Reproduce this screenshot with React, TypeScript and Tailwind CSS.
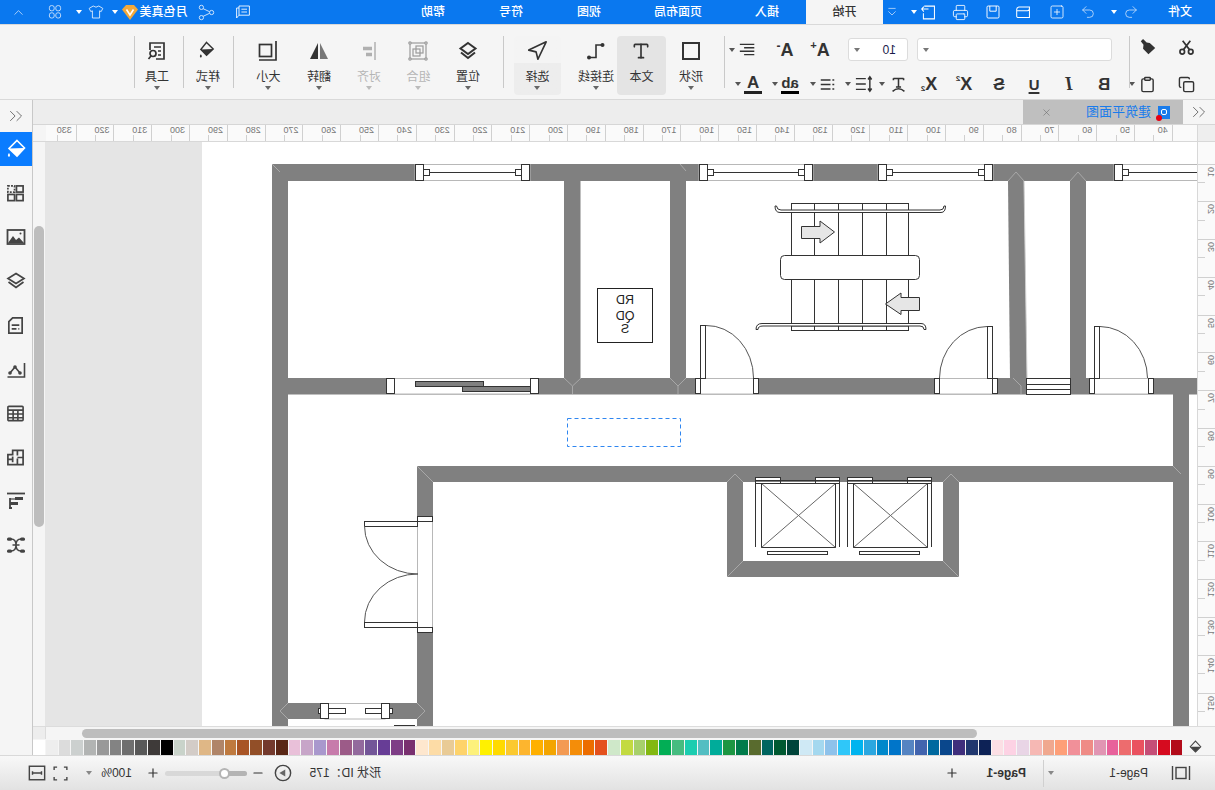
import React from "react";
import { Printer, SquarePlus, Undo2, Redo2, Copy, Clipboard, ChevronUp, ChevronsLeft, Navigation, Type, X, Plus, Minus } from "lucide-react";

type P = { children?: React.ReactNode; s?: number; c?: string; w?: number };
// draws in on-screen orientation: the page itself is mirrored
const I = ({ children, s = 20, c = "text-[#3a3a3a]", w = 2 }: P) => (
  <svg viewBox="0 0 20 20" width={s} height={s} fill="none" stroke="currentColor" strokeWidth={w} className={"-scale-x-100 shrink-0 " + c}>
    {children}
  </svg>
);
const Caret = ({ c = "border-t-[#555]" }: { c?: string }) => (
  <span className={"block w-0 h-0 shrink-0 border-x-[3px] border-x-transparent border-t-[4px] " + c} />
);
const Wh = "border-t-white";

const Slot = ({ c, children }: { c: string; children?: React.ReactNode }) => (
  <div className={"flex items-center justify-center shrink-0 " + c}>{children}</div>
);

const Sep = ({ c = "" }: { c?: string }) => <div className={"w-px h-[52px] mt-[11px] bg-[#c9c9c9] shrink-0 " + c} />;

const Big = ({ c, label, icon, caret = true, off = false, bg = "" }: { c: string; label: string; icon: React.ReactNode; caret?: boolean; off?: boolean; bg?: string }) => (
  <div className={"flex flex-col items-center shrink-0 h-[59px] mt-[11px] rounded-sm " + c + " " + bg}>
    <div className="h-[29px] flex items-center justify-center">{icon}</div>
    <div className={"text-[12px] leading-[16px] mt-[4px] " + (off ? "text-[#b5b5b5]" : "text-[#333]")}>{label}</div>
    {caret && <div className="mt-[1px]"><Caret c={off ? "border-t-[#bbb]" : "border-t-[#666]"} /></div>}
  </div>
);

const Glyph = ({ t, c = "" }: { t: string; c?: string }) => (
  <span className={"font-['Liberation_Sans',sans-serif] text-[#333] leading-none " + c}>{t}</span>
);

const palette = ["#ffffff","#eeeeee","#dcdcdc","#ccd0cf","#b2b4b3","#999999","#838383","#6f6f6f","#595959","#3e3a39","#000000","#c9d3ca","#d3ccc7","#dfb786","#b08569","#bf7a3f","#a85425","#924f28","#743a2d","#5a2716","#e9c0d9","#c7a5c8","#a998cd","#c77bab","#9c5b88","#936a9d","#735698","#673d96","#7e3d86","#79306f","#fee7ce","#fddca6","#e9cb96","#fed36b","#fdf17b","#fff100","#ffda00","#fbc92f","#fdb52e","#ffb000","#f3a500","#f39a53","#f48d09","#ec6d00","#e4511d","#cfe8c9","#c3da41","#a7d06b","#83b811","#02ae55","#46bc80","#1bcdb0","#53bec2","#00ac9a","#1c9642","#007b4a","#596b2e","#006560","#005931","#00443a","#cfe9f5","#a4d8ef","#8ec2eb","#2fc7f9","#00b4ef","#2ba7e0","#0088cb","#0075c9","#5584c2","#4264ae","#00699f","#0a478c","#3f2e7c","#20376f","#0d2256","#fcdfe5","#fdd2e4","#e9d5e6","#f6b8b4","#f0a88f","#fe9f78","#f19099","#ef8b86","#e195b3","#e8619b","#ed6c6e","#ea5260","#c54e77","#d60b1f","#b30b1a"];

const hLabels = Array.from({ length: 30 }, (_, i) => 40 + i * 10);
const vLabels = Array.from({ length: 15 }, (_, i) => 10 + i * 10);

const TopBar = () => (
  <div className="flex items-center h-[24px] bg-[#0a78ef] text-white text-[12px] font-medium shrink-0">
    <Slot c="w-[70px]">文件</Slot>
    <Slot c="w-[28px]"><Redo2 size={16} strokeWidth={1.2} className="-scale-x-100 text-[#cfe3fb]" /></Slot>
    <Slot c="w-[6px]"><Caret c={Wh} /></Slot>
    <Slot c="w-[28px] ml-[9px]"><Undo2 size={16} strokeWidth={1.2} className="-scale-x-100 text-[#cfe3fb]" /></Slot>
    <Slot c="w-[28px] ml-[3px]"><SquarePlus size={16} strokeWidth={1.2} /></Slot>
    <Slot c="w-[28px] ml-[5px]">
      <I s={17} c="text-white" w={1.2}><path d="M2 6.5Q2 4 4.5 3.5H17V16H4Q2 16 2 14ZM2.5 8H14.5Q17 8 17 5" /></I>
    </Slot>
    <Slot c="w-[28px] ml-[3px]">
      <I s={16} c="text-white" w={1.2}><rect x="2.5" y="2.5" width="15" height="15" rx="1.5" /><path d="M6 2.5V9H14V2.5" /></I>
    </Slot>
    <Slot c="w-[28px] ml-[4px]"><Printer size={17} strokeWidth={1.2} /></Slot>
    <Slot c="w-[28px] ml-[4px]">
      <I s={17} c="text-white" w={1.2}><path d="M5 2.5H17V17.5H4V11M10 6H2M4.5 3L2 6L4.5 9" /></I>
    </Slot>
    <Slot c="w-[6px] -ml-[2px]"><Caret c={Wh} /></Slot>
    <Slot c="w-[16px] ml-[11px]">
      <I s={12} c="text-[#d6e7fc]" w={1.2}><path d="M4 4H16M4 9L10 15L16 9" /></I>
    </Slot>
    <Slot c="w-[77px] h-[24px] ml-[1px] bg-[#f5f5f5] text-[#333]">开始</Slot>
    <Slot c="w-[78px]">插入</Slot>
    <Slot c="w-[100px]">页面布局</Slot>
    <Slot c="w-[78px]">视图</Slot>
    <Slot c="w-[78px]">符号</Slot>
    <Slot c="w-[78px]">帮助</Slot>
    <Slot c="w-[28px] ml-[137px]">
      <I s={16} c="text-white" w={1.1}><path d="M5 2.5H18V14H5ZM5 5H2V17.5L5 14M8 6.5H15M8 10H15" /></I>
    </Slot>
    <Slot c="w-[28px] ml-[8px]">
      <I s={17} c="text-[#d6e7fc]" w={1.1}><circle cx="4" cy="4" r="2.5" /><circle cx="4" cy="16" r="2.5" /><circle cx="16" cy="10" r="2.5" /><path d="M6 5.5L13.5 9M6 14.5L13.5 11" /></I>
    </Slot>
    <Slot c="w-[47px] ml-[6px]"><span className="whitespace-nowrap">月色真美</span></Slot>
    <Slot c="w-[16px] ml-[2px]">
      <svg viewBox="0 0 16 15" width="16" height="15"><path d="M0 4.5L4 0H12L16 4.5L8 15Z" fill="#f2a93b" /><path d="M4.5 4.5L8 10L11.5 4.5" fill="none" stroke="#fff" strokeWidth="1.6" /></svg>
    </Slot>
    <Slot c="w-[6px] ml-[4px]"><Caret c={Wh} /></Slot>
    <Slot c="w-[20px] ml-[6px]">
      <I s={16} c="text-[#e3effd]" w={1.1}><path d="M6.5 2.5L1.5 5.5L3.5 9.5L5.5 8.5V17.5H14.5V8.5L16.5 9.5L18.5 5.5L13.5 2.5Q10 5.5 6.5 2.5Z" /></I>
    </Slot>
    <Slot c="w-[6px] ml-[4px]"><Caret c={Wh} /></Slot>
    <Slot c="w-[20px] ml-[11px]">
      <I s={16} c="text-[#d6e7fc]" w={1.1}><rect x="3" y="2" width="6" height="6.5" rx="2.5" /><rect x="11" y="2" width="6" height="6.5" rx="2.5" /><rect x="3" y="11" width="6" height="6.5" rx="2.5" /><rect x="11" y="11" width="6" height="6.5" rx="2.5" /></I>
    </Slot>
    <Slot c="w-[20px] ml-[16px]"><ChevronUp size={15} strokeWidth={1.2} className="text-[#d6e7fc]" /></Slot>
  </div>
);

const Ribbon = () => (
  <div className="flex h-[76px] bg-[#f5f5f5] border-t border-b border-[#d9d9d9] shrink-0">
    {/* clipboard */}
    <div className="w-[85px] shrink-0 flex flex-col">
      <div className="flex h-[24px] mt-[10px]">
        <Slot c="w-[56px]">
          <I s={17} c="text-[#333]"><circle cx="5" cy="15" r="2.7" /><circle cx="15" cy="15" r="2.7" /><path d="M6.5 12.5L14.5 2M13.5 12.5L5.5 2" /></I>
        </Slot>
        <Slot c="w-[22px]">
          <I s={18} c="text-[#333]"><path d="M2 3.5L4.5 1L8.5 5L12 5.5L18 11L10.5 18L4.5 12L5 7.5Z" fill="currentColor" stroke="none" /></I>
        </Slot>
      </div>
      <div className="flex h-[24px] mt-[13px]">
        <Slot c="w-[56px]"><Copy size={17} strokeWidth={2} className="-scale-x-100 text-[#333]" /></Slot>
        <Slot c="w-[22px]"><Clipboard size={17} strokeWidth={2} className="text-[#333]" /></Slot>
        <Slot c="w-[6px] ml-[2px]"><Caret /></Slot>
      </div>
    </div>
    <Sep />
    {/* font */}
    <div className="w-[404px] shrink-0 flex flex-col text-[#333]">
      <div className="flex items-center h-[23px] mt-[13px]">
        <div className="w-[195px] h-[23px] ml-[17px] bg-white border border-[#dcdcdc] rounded-[3px] flex items-center justify-end pr-[5px] shrink-0"><Caret c="border-t-[#777]" /></div>
        <div className="w-[60px] h-[23px] ml-[9px] bg-white border border-[#dcdcdc] rounded-[3px] flex items-center shrink-0">
          <span className="ml-[11px] text-[12px] text-[#1a1a4a] font-['Liberation_Sans',sans-serif]">10</span>
          <span className="ml-auto mr-[5px]"><Caret c="border-t-[#777]" /></span>
        </div>
        <Slot c="w-[36px] ml-[10px]"><Glyph t="A" c="text-[18px] font-bold" /><Glyph t="+" c="text-[11px] font-bold -mt-[8px]" /></Slot>
        <Slot c="w-[34px]"><Glyph t="A" c="text-[18px] font-bold" /><Glyph t="-" c="text-[12px] font-bold -mt-[8px]" /></Slot>
        <Slot c="w-[24px] ml-[8px]">
          <I s={17} c="text-[#333]" w={1.7}><path d="M1 4H18M6 8H18M1 12H18M6 16H18" /></I>
        </Slot>
        <Slot c="w-[6px] ml-[1px]"><Caret /></Slot>
      </div>
      <div className="flex items-center h-[24px] mt-[11px] ml-[7px]">
        <Slot c="w-[36px]"><Glyph t="B" c="text-[17px] font-bold" /></Slot>
        <Slot c="w-[34px]"><Glyph t="I" c="text-[18px] font-bold italic font-['Liberation_Serif',serif]" /></Slot>
        <Slot c="w-[36px]"><Glyph t="U" c="text-[15px] font-bold underline decoration-[2px] underline-offset-2" /></Slot>
        <Slot c="w-[34px]"><Glyph t="S" c="text-[17px] font-bold line-through" /></Slot>
        <Slot c="w-[36px]"><Glyph t="X" c="text-[18px] font-bold" /><Glyph t="2" c="text-[8px] font-bold -mt-[10px]" /></Slot>
        <Slot c="w-[34px]"><Glyph t="X" c="text-[18px] font-bold" /><Glyph t="2" c="text-[8px] font-bold mt-[10px]" /></Slot>
        <Slot c="w-[35px] gap-[5px] pl-[2px]">
          <I s={17} c="text-[#333]" w={1.8}><path d="M4 3H16M10 3V13M7 13H13M3 18Q10 12 17 18" /><path d="M4 2.5V5M16 2.5V5" /></I>
          <Caret />
        </Slot>
        <Slot c="w-[36px] gap-[4px]">
          <I s={18} c="text-[#333]" w={1.6}><path d="M1 4H12M1 10H12M1 16H12" /><path d="M16.5 2V18M14.5 5L16.5 2L18.5 5M14.5 15L16.5 18L18.5 15" /></I>
          <Caret />
        </Slot>
        <Slot c="w-[37px] gap-[4px]">
          <I s={15} c="text-[#333]" w={2}><path d="M1 4H14M1 10H14M1 16H14M16.5 4H19M16.5 10H19M16.5 16H19" /></I>
          <Caret />
        </Slot>
        <Slot c="w-[37px] gap-[3px]">
          <div className="flex flex-col items-center pt-[1px]"><span className="text-[15px] leading-[15px] font-bold font-['Liberation_Sans',sans-serif] text-[#333]">ab</span><span className="w-[18px] h-[3px] bg-black mt-[1px]" /></div>
          <Caret />
        </Slot>
        <Slot c="w-[37px] gap-[3px]">
          <div className="flex flex-col items-center pt-[1px]"><span className="text-[17px] leading-[15px] font-bold font-['Liberation_Sans',sans-serif] text-[#333]">A</span><span className="w-[18px] h-[3px] bg-[#222] mt-[1px]" /></div>
          <Caret />
        </Slot>
      </div>
    </div>
    <Sep />
    <Big c="w-[50px] ml-[8px]" label="形状" icon={<div className="w-[18px] h-[18px] border-2 border-[#333]" />} />
    <Big c="w-[49px]" bg="bg-[#e4e4e4]" label="文本" caret={false} icon={<Type size={20} strokeWidth={2} className="text-[#333]" />} />
    <Big c="w-[42px]" label="连接线" icon={
      <I s={20} c="text-[#333]" w={1.6}><path d="M4 16.5H10V4H15" /><circle cx="3" cy="16.5" r="2" fill="currentColor" stroke="none" /><circle cx="16.5" cy="4" r="2" fill="currentColor" stroke="none" /></I>
    } />
    <Big c="w-[47px] ml-[14px]" bg="bg-linear-to-b from-[#f4f4f4] from-45% to-[#ededed] to-45%" label="选择" icon={<Navigation size={22} strokeWidth={1.8} className="-scale-x-100 text-[#333]" />} />
    <Sep c="ml-[10px]" />
    <Big c="w-[50px] ml-[10px]" label="位置" icon={
      <I s={20} c="text-[#333]" w={2}><path d="M10 2L17.5 7.5L10 13L2.5 7.5Z" /><path d="M3 11.5L10 17L17 11.5" /></I>
    } />
    <Big c="w-[49px]" off label="组合" icon={
      <I s={20} c="text-[#9a9a9a]" w={1.2}><rect x="2" y="2" width="16" height="16" /><rect x="8" y="5" width="7" height="7" /><rect x="5" y="8" width="7" height="7" /><circle cx="2" cy="2" r="1.2" fill="#f5f5f5" /><circle cx="18" cy="2" r="1.2" fill="#f5f5f5" /><circle cx="2" cy="18" r="1.2" fill="#f5f5f5" /><circle cx="18" cy="18" r="1.2" fill="#f5f5f5" /></I>
    } />
    <Big c="w-[50px]" off label="对齐" icon={
      <I s={20} c="text-[#b0b0b0]" w={1.5}><path d="M16 1V19" /><path d="M4 7.5H13M7 13.5H13" strokeWidth="3.5" /></I>
    } />
    <Big c="w-[50px]" label="翻转" icon={
      <I s={20}><path d="M9 2V18H1Z" fill="#333" stroke="none" /><path d="M11 2V18H19Z" fill="#777" stroke="none" /></I>
    } />
    <Big c="w-[51px]" label="大小" icon={
      <I s={20} c="text-[#333]" w={1.7}><rect x="1.5" y="3.5" width="12" height="12" /><path d="M18 0V19H1" /></I>
    } />
    <Sep c="ml-[9px]" />
    <Big c="w-[40px] ml-[5px]" label="样式" icon={
      <I s={19} c="text-[#333]" w={1.5}><path d="M9 1.5L16 8.5L9 15L3 9Z" /><path d="M3 9L16 8.5L9 15Z" fill="currentColor" stroke="none" /><path d="M3 14Q1 16.5 3 17.5Q5 16.5 3 14Z" fill="currentColor" stroke="none" /></I>
    } />
    <Sep c="ml-[4px]" />
    <Big c="w-[42px] ml-[5px]" label="工具" icon={
      <I s={20} c="text-[#333]" w={1.7}><path d="M9 18H17V2H3V9" /><path d="M7 6H14M11 10H14M11 14H14" /><circle cx="6" cy="12.5" r="3" /><path d="M4 15L1.5 18" /></I>
    } />
    <Sep c="ml-[1px]" />
  </div>
);

const Wall = ({ x, y, w, h }: { x: number; y: number; w: number; h: number }) => <rect x={x} y={y} width={w} height={h} fill="#808080" />;
const Opening = ({ x, y, w, h }: { x: number; y: number; w: number; h: number }) => <rect x={x} y={y + 0.5} width={w} height={h - 1} fill="#fff" stroke="#b8b8b8" strokeWidth="1" />;
const J = ({ x, y, w, h, f = "#fff" }: { x: number; y: number; w: number; h: number; f?: string }) => <rect x={x + 0.5} y={y + 0.5} width={w} height={h} fill={f} stroke="#333" strokeWidth="1" />;
const Miter = ({ d }: { d: string }) => <path d={d} fill="none" stroke="#a8a8a8" strokeWidth="1" />;
const Arc = ({ d }: { d: string }) => <path d={d} fill="none" stroke="#555" strokeWidth="1" />;
const Win = ({ a, b }: { a: number; b: number }) => (
  <g>
    <Opening x={a} y={164} w={b - a} h={17} />
    <path d={`M${a + 15} 172.5H${b - 15}`} stroke="#333" strokeWidth="1" />
    <J x={a + 8} y={169} w={6} h={6} />
    <J x={b - 15} y={169} w={6} h={6} />
    <J x={a} y={164} w={8} h={16} />
    <J x={b - 9} y={164} w={8} h={16} />
  </g>
);

const Plan = () => (
  <svg width="995" height="584" className="block shrink-0 bg-white">
    <g transform="matrix(-1 0 0 1 1197 -142)">
      <Wall x={272} y={164} w={925} h={17} />
      <Wall x={272} y={164} w={16} h={562} />
      <Wall x={272} y={378} w={925} h={16.5} />
      <Wall x={564} y={181} w={16.5} h={197} />
      <Wall x={670} y={181} w={16} h={197} />
      <polygon points="1008,181 1024,181 1027,378 1010,378" fill="#808080" />
      <path d="M1024 181L1027 378" stroke="#cfcfcf" strokeWidth="1" />
      <Wall x={1070} y={181} w={16} h={197} />
      <Wall x={1173} y={394} w={16} h={332} />
      <Wall x={417} y={466} w={772} h={16} />
      <Wall x={417} y={466} w={16} h={260} />
      <Wall x={288} y={703} w={129} h={16} />
      <Wall x={727} y={482} w={16} h={95} />
      <Wall x={943} y={482} w={16} h={95} />
      <Wall x={727} y={561} w={232} h={16} />

      <Miter d="M564 378L572.5 386L581 378M572.5 386V394M670 378L678 386L686 378M678 386V394" />
      <Miter d="M417 466L433 482M288 703L280 711L288 719M417 703L425 711L417 719" />
      <Miter d="M727 482L735 474L743 482M943 482L951 474L959 482M743 561L727 577M943 561L959 577" />
      <Miter d="M1008 181L1016 172L1024 181M1070 181L1078 172L1086 181" />
      <Miter d="M680 164L686 171M1013 378L1021 386V394M1173 466L1181 474M272 164L280 172" />

      <Win a={415} b={530} />
      <Win a={699} b={813} />
      <Win a={878} b={993} />
      <Opening x={1114} y={164} w={100} h={17} />
      <path d="M1129 172.5H1197" stroke="#333" strokeWidth="1" />
      <J x={1122} y={169} w={6} h={6} />
      <J x={1114} y={164} w={8} h={16} />

      {/* sliding door */}
      <Opening x={390} y={378} w={145} h={16.5} />
      <J x={415} y={381} w={68} h={5} f="#808080" />
      <J x={462} y={386} w={68} h={5} f="#808080" />
      <J x={386} y={378} w={8} h={15} />
      <J x={530} y={378} w={8} h={15} />

      {/* doors */}
      <Opening x={697} y={378} w={60} h={16.5} />
      <J x={700} y={325} w={5} h={53} />
      <J x={695} y={378} w={5} h={15} />
      <J x={753} y={378} w={5} h={15} />
      <Arc d="M706 325.5A47 52.5 0 0 1 753.5 378" />

      <Opening x={936} y={378} w={60} h={16.5} />
      <J x={987} y={326} w={5} h={52} />
      <J x={934} y={378} w={5} h={15} />
      <J x={992} y={378} w={5} h={15} />
      <Arc d="M987 326.5A48 52 0 0 0 939.5 378" />

      <Opening x={1091} y={378} w={60} h={16.5} />
      <J x={1094} y={326} w={5} h={52} />
      <J x={1089} y={378} w={5} h={15} />
      <J x={1148} y={378} w={5} h={15} />
      <Arc d="M1100 326.5A48 52 0 0 1 1147.5 378" />

      {/* steps in wall */}
      <rect x="1026.5" y="378.5" width="44" height="16" fill="#fff" stroke="#333" />
      <path d="M1026.5 384.5H1070.5M1026.5 389.5H1070.5" stroke="#333" />

      {/* stairs */}
      <path d="M791.5 203.5V331M814.5 203.5V331M838.5 203.5V331M862.5 203.5V331M886.5 203.5V331M908.5 203.5V331" stroke="#333" />
      <rect x="791.5" y="203.5" width="117" height="7" fill="none" stroke="#333" />
      <rect x="791.5" y="326" width="117" height="4.5" fill="none" stroke="#333" />
      <path d="M775 206Q775 212.5 780 212.5L941 212.5Q945.5 212.5 945.5 206L944 206Q944 210 940 210L781 210Q777 210 776.5 206Z" fill="#fff" stroke="#333" />
      <path d="M756 329.5Q756 323.5 762 323.5L921 323.5Q926 323.5 926 329.5L924 329.5Q924 326 920 326L763 326Q758 326 758 329.5Z" fill="#fff" stroke="#333" />
      <rect x="780.5" y="255.5" width="139" height="24" rx="4" fill="#fff" stroke="#333" />
      <path d="M801.5 226.5H820V221L834.5 232L820 243V238.5H801.5Z" fill="#e6e6e6" stroke="#333" />
      <path d="M919.5 297.5H901V293L885.5 304L901 314.5V310.5H919.5Z" fill="#e6e6e6" stroke="#333" />

      {/* text box frame */}
      <rect x="597.5" y="288.5" width="55" height="54" fill="#fff" stroke="#222" />
      {/* selection */}
      <rect x="567.5" y="418.5" width="113" height="28" fill="none" stroke="#2f86f0" strokeDasharray="4 3" />

      {/* double door */}
      <rect x="417.5" y="516.5" width="15" height="116" fill="#fff" stroke="#b8b8b8" />
      <J x={417} y={516} w={15} h={5} />
      <J x={417} y={627} w={15} h={5} />
      <J x={364} y={521} w={53} h={5} />
      <J x={364} y={622} w={53} h={5} />
      <Arc d="M364.5 526A53 48 0 0 0 418 574" />
      <Arc d="M364.5 622A53 48 0 0 1 418 574" />

      {/* small window */}
      <rect x="325" y="703.5" width="60" height="15.5" fill="#fff" stroke="#b8b8b8" />
      <J x={318} y={708} w={27} h={5} />
      <J x={365} y={708} w={27} h={5} />
      <J x={320} y={703} w={8} h={15} />
      <J x={381} y={703} w={8} h={15} />
      <path d="M394 725.5H415" stroke="#333" />

      {/* lifts */}
      <g fill="none" stroke="#333">
        <rect x="761.5" y="483.5" width="74" height="64" />
        <path d="M761.5 483.5L835.5 547.5M835.5 483.5L761.5 547.5" stroke="#666" />
        <path d="M755.5 547V480.5H839.5V547" />
        <rect x="767.5" y="551.5" width="60" height="3" />
        <rect x="853.5" y="483.5" width="74" height="64" />
        <path d="M853.5 483.5L927.5 547.5M927.5 483.5L853.5 547.5" stroke="#666" />
        <path d="M847.5 547V480.5H931.5V547" />
        <rect x="859.5" y="551.5" width="60" height="3" />
      </g>
      <J x={755} y={477} w={25} h={3} />
      <J x={815} y={477} w={24} h={3} />
      <J x={847} y={477} w={25} h={3} />
      <J x={907} y={477} w={24} h={3} />
      <J x={755} y={480} w={25} h={3} f="none" />
      <J x={815} y={480} w={24} h={3} f="none" />
      <J x={847} y={480} w={25} h={3} f="none" />
      <J x={907} y={480} w={24} h={3} f="none" />
    </g>
    <g fontFamily="'Liberation Sans', sans-serif" fontSize="12.5" fill="#222" textAnchor="middle">
      <text x="572" y="162">RD</text>
      <text x="572" y="177.5">QD</text>
      <text x="572" y="191">S</text>
    </g>
  </svg>
);

const SideIcon = ({ children }: { children: React.ReactNode }) => (
  <div className="h-[44px] flex items-center justify-center shrink-0">{children}</div>
);

const Sidebar = () => (
  <div className="w-[33px] shrink-0 bg-[#f5f5f5] border-l border-[#c8c8c8] flex flex-col">
    <div className="h-[32px] flex items-center justify-center shrink-0"><ChevronsLeft size={22} strokeWidth={1} className="text-[#666]" /></div>
    <div className="h-[34px] flex items-center justify-center shrink-0 bg-[#0a7cff]">
      <I s={20} c="text-white" w={1.6}><path d="M11 1.5L18.5 9L11 17L3 9.5Z" /><path d="M3 9.5L18.5 9L11 17Z" fill="currentColor" stroke="none" /><path d="M3 14Q.8 16.5 3 18Q5 16.5 3 14Z" fill="currentColor" stroke="none" /></I>
    </div>
    <div className="h-[5px] shrink-0" />
    <SideIcon>
      <I s={19} c="text-[#444]" w={1.8}><rect x="11" y="2" width="7" height="6.5" /><rect x="2" y="11" width="7" height="6.5" /><rect x="11" y="11" width="7" height="6.5" /><path d="M2 2H9V8.5H2Z" strokeDasharray="2 1.3" /></I>
    </SideIcon>
    <SideIcon>
      <I s={20} c="text-[#444]" w={1.8}><rect x="1.5" y="3" width="17" height="14" /><path d="M2 16L7 9L10 13L13 10.5L18 16Z" fill="currentColor" stroke="none" /><circle cx="14.5" cy="6.5" r="1" fill="currentColor" stroke="none" /></I>
    </SideIcon>
    <SideIcon>
      <I s={20} c="text-[#444]" w={1.7}><path d="M10 2.5L18 7.5L10 12.5L2 7.5Z" /><path d="M2.5 11L10 16.5L17.5 11" /></I>
    </SideIcon>
    <SideIcon>
      <I s={19} c="text-[#444]" w={1.8}><path d="M7 2H17V18H3V6Z" /><path d="M6 9.5H14M6 13.5H11M13 13.5H14" /></I>
    </SideIcon>
    <SideIcon>
      <I s={20} c="text-[#444]" w={1.6}><path d="M1.5 18H18.5V4" /><path d="M4 14L9 8L14 14" /><circle cx="4" cy="14" r="1.8" fill="currentColor" stroke="none" /><circle cx="9" cy="8" r="1.8" fill="currentColor" stroke="none" /><circle cx="14" cy="14" r="1.8" fill="currentColor" stroke="none" /></I>
    </SideIcon>
    <SideIcon>
      <I s={19} c="text-[#444]" w={1.7}><rect x="2" y="2.5" width="16" height="15" rx="1" /><path d="M2 6.5H18M2 10.5H18M2 14.5H18M7.5 6.5V17.5M12.5 6.5V17.5" /></I>
    </SideIcon>
    <SideIcon>
      <I s={19} c="text-[#444]" w={1.8}><path d="M2 7H7V2.5H18V17.5H2Z" /><path d="M12 3V8M12 11V17M2 12H7M7 9V15M12 10H18" /></I>
    </SideIcon>
    <SideIcon>
      <I s={20} c="text-[#444]" w={1.8}><path d="M1 2.5H19" /><path d="M4 7V17M3 17H6" /><path d="M4 8H9" strokeWidth="1.2" /><rect x="9" y="6" width="8" height="3" fill="currentColor" stroke="none" /><rect x="4" y="11" width="8" height="3" fill="currentColor" stroke="none" /></I>
    </SideIcon>
    <SideIcon>
      <I s={20} c="text-[#444]" w={1.5}><path d="M5 4Q10 4 10 10Q10 16 5 16M15 4Q10 4 10 10Q10 16 15 16M6.5 10H13.5" /><rect x="1" y="2.5" width="5" height="3.2" rx="1.5" fill="currentColor" stroke="none" /><rect x="14" y="2.5" width="5" height="3.2" rx="1.5" fill="currentColor" stroke="none" /><rect x="1" y="14.5" width="5" height="3.2" rx="1.5" fill="currentColor" stroke="none" /><rect x="14" y="14.5" width="5" height="3.2" rx="1.5" fill="currentColor" stroke="none" /></I>
    </SideIcon>
  </div>
);

const Status = () => (
  <div className="flex items-center h-[35px] shrink-0 bg-linear-to-b from-[#f8f8f8] to-[#e2e2e2] border-t border-[#d9d9d9] text-[12px] text-[#333]">
    <Slot c="w-[20px] ml-[24px]">
      <I s={20} c="text-[#444]" w={1.4}><rect x="5" y="4.5" width="10" height="11" /><path d="M1.5 3V17M18.5 3V17" /></I>
    </Slot>
    <span className="ml-[23px] w-[42px] whitespace-nowrap text-[12px] font-['Liberation_Sans',sans-serif]">Page-1</span>
    <Slot c="w-[6px] ml-[52px]"><Caret c="border-t-[#888]" /></Slot>
    <div className="w-px h-[27px] bg-[#d0d0d0] ml-[4px]" />
    <span className="ml-[17px] w-[45px] whitespace-nowrap text-[12px] font-bold font-['Liberation_Sans',sans-serif]">Page-1</span>
    <Slot c="w-[14px] ml-[22px]"><Plus size={14} strokeWidth={2} className="text-[#333]" /></Slot>
    <span className="ml-[564px] w-[77px] whitespace-nowrap">形状 ID：175</span>
    <Slot c="w-[18px] ml-[12px]">
      <I s={18} c="text-[#444]" w={1.6}><circle cx="10" cy="10" r="8.5" /><path d="M6 10L12.5 6V14Z" fill="#666" stroke="none" /></I>
    </Slot>
    <Slot c="w-[14px] ml-[9px]"><Minus size={14} strokeWidth={2} className="text-[#333]" /></Slot>
    <div className="relative w-[82px] h-[5px] ml-[4px] rounded-full bg-[#d8d8d8] shrink-0">
      <div className="w-[23px] h-[5px] rounded-full bg-[#b4b4b4]" />
      <div className="absolute left-[17px] -top-[3px] w-[11px] h-[11px] rounded-full bg-white border-2 border-[#b4b4b4]" />
    </div>
    <Slot c="w-[14px] ml-[5px]"><Plus size={14} strokeWidth={2} className="text-[#333]" /></Slot>
    <span className="ml-[14px] w-[32px] text-[12px] whitespace-nowrap font-['Liberation_Sans',sans-serif]">100%</span>
    <Slot c="w-[6px] ml-[8px]"><Caret c="border-t-[#888]" /></Slot>
    <Slot c="w-[16px] ml-[17px]">
      <I s={17} c="text-[#444]" w={1.6}><path d="M6 2.5H2.5V6M14 2.5H17.5V6M6 17.5H2.5V14M14 17.5H17.5V14" /></I>
    </Slot>
    <Slot c="w-[18px] ml-[7px]">
      <I s={18} c="text-[#444]" w={1.6}><rect x="1.5" y="2.5" width="17" height="15" /><path d="M5 10H15M5 8V12M15 8V12" /></I>
    </Slot>
  </div>
);

export default function App() {
  return (
    <div className="w-[1215px] h-[790px] overflow-hidden flex flex-col -scale-x-100 bg-[#f5f5f5] font-['Liberation_Sans','Noto_Sans_CJK_SC',sans-serif]">
      <TopBar />
      <Ribbon />
      <div className="flex flex-1 min-h-0">
        <div className="w-[1182px] shrink-0 flex flex-col">
          {/* tab strip */}
          <div className="flex h-[25px] shrink-0 bg-[#ededed] border-b border-[#d6d6d6]">
            <Slot c="w-[32px] bg-[#f5f5f5]"><ChevronsLeft size={22} strokeWidth={1} className="text-[#666]" /></Slot>
            <div className="w-[160px] flex items-center bg-[#bfbfbf] text-[#1a7ceb] text-[13px]">
              <div className="relative ml-[13px] w-[12px] h-[13px] bg-[#1a7ceb] flex items-center justify-center">
                <span className="w-[6px] h-[6px] border border-white rounded-[2px]" />
                <span className="absolute -right-[2px] -bottom-[2px] w-[6px] h-[6px] bg-[#e60012] rounded-full" />
              </div>
              <span className="ml-[7px] whitespace-nowrap">建筑平面图</span>
              <X size={11} strokeWidth={1.2} className="ml-[34px] text-[#666]" />
            </div>
          </div>
          {/* horizontal ruler */}
          <div className="flex h-[17px] shrink-0 overflow-hidden bg-[#fafafa] border-b border-[#d8d8d8]">
            <div className="w-[18px] shrink-0 bg-[#eeeeee] border-r border-[#d8d8d8]" />
            <div className="w-[24.2px] shrink-0" />
            <div className="flex w-[1127px] overflow-hidden shrink-0">
              {hLabels.map((n) => (
                <div key={n} className="w-[37.8px] shrink-0 border-l border-[#d0d0d0] flex flex-col justify-between">
                  <span className="text-[9px] leading-[10px] pl-[4px] text-[#777] font-['Liberation_Sans',sans-serif]">{n}</span>
                  <div className="w-[18.4px] h-[6px] border-r border-[#d0d0d0]" />
                </div>
              ))}
            </div>
            <div className="flex-1 bg-[#f5f5f5]" />
          </div>
          {/* canvas row */}
          <div className="flex h-[584px] shrink-0">
            <div className="w-[18px] shrink-0 bg-[#fafafa] border-r border-[#d8d8d8] flex flex-col overflow-hidden">
              <div className="h-[21.5px] shrink-0" />
              {vLabels.map((n) => (
                <div key={n} className="h-[37.8px] shrink-0 border-t border-[#d0d0d0] flex justify-between">
                  <span className="[writing-mode:vertical-rl] rotate-180 text-[9px] leading-[9px] self-start pt-[3px] pb-[2px] pl-[1px] text-[#777] font-['Liberation_Sans',sans-serif]">{n}</span>
                  <div className="w-[8px] h-[18.4px] border-b border-[#d0d0d0]" />
                </div>
              ))}
            </div>
            <Plan />
            <div className="w-[157px] shrink-0 bg-[#e5e5e5]" />
            <div className="w-[12px] shrink-0 bg-[#f5f5f5] flex justify-center">
              <div className="w-[10px] h-[301px] mt-[84px] rounded-full bg-[#bdbdbd]" />
            </div>
          </div>
          {/* horizontal scrollbar */}
          <div className="flex h-[13px] shrink-0 bg-[#f5f5f5] items-center border-t border-[#dcdcdc]">
            <div className="w-[238px] shrink-0" />
            <div className="w-[895px] h-[9px] rounded-full bg-[#bdbdbd] shrink-0" />
            <div className="flex-1" />
            <div className="w-[13px] h-[12px] border-l border-[#dcdcdc] bg-[#ededed]" />
          </div>
          {/* palette */}
          <div className="flex items-center h-[16px] shrink-0 bg-[#f5f5f5]">
            <Slot c="w-[16px] ml-[11px]">
              <I s={15} c="text-[#444]" w={1.4}><path d="M10 1.5L17 9L10 16L3 9Z" /><path d="M3 9L17 9L10 16Z" fill="currentColor" stroke="none" /></I>
            </Slot>
            <div className="flex flex-row-reverse gap-px ml-[5px] w-[1150px] h-[15px] shrink-0">
              {palette.map((c, i) => (
                <div key={i} className="flex-1" style={{ backgroundColor: c }} />
              ))}
            </div>
          </div>
        </div>
        <Sidebar />
      </div>
      <Status />
    </div>
  );
}
